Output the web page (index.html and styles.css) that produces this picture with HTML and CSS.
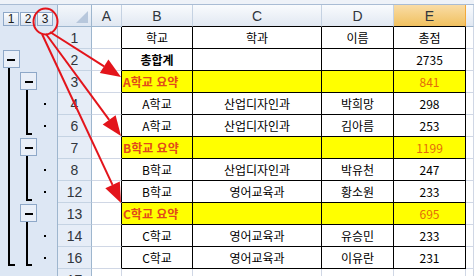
FILE: index.html
```html
<!DOCTYPE html>
<html lang="ko">
<head>
    <meta charset="UTF-8">
    <title>그룹 개요 수준 3</title>
    <link rel="stylesheet" href="styles.css">
</head>
<body>
    <div class="strip"></div>
    <div class="app">
        <!-- outline panel -->
        <div class="outline">
            <div class="levels">
                <span class="lvl">1</span>
                <span class="lvl">2</span>
                <span class="lvl">3</span>
            </div>
            <svg class="tree" width="57" height="249" viewBox="0 27 57 249">
                <!-- level 1 -->
                <rect class="btn" x="3.5" y="50.5" width="16" height="17"/>
                <rect x="7" y="59" width="8" height="2"/>
                <rect x="8" y="68" width="2" height="198"/>
                <rect x="8" y="264" width="7" height="2"/>
                <!-- level 2 -->
                <rect class="btn" x="20.5" y="72.5" width="16" height="17"/>
                <rect x="25" y="81" width="8" height="2"/>
                <rect x="26" y="90" width="2" height="45"/>
                <rect x="26" y="133" width="6" height="2"/>

                <rect class="btn" x="20.5" y="138.5" width="16" height="17"/>
                <rect x="25" y="147" width="8" height="2"/>
                <rect x="26" y="156" width="2" height="45"/>
                <rect x="26" y="199" width="6" height="2"/>

                <rect class="btn" x="20.5" y="204.5" width="16" height="17"/>
                <rect x="25" y="213" width="8" height="2"/>
                <rect x="26" y="222" width="2" height="44"/>
                <rect x="26" y="264" width="6" height="2"/>
                <!-- detail dots -->
                <rect x="44" y="103" width="2" height="2"/>
                <rect x="44" y="125" width="2" height="2"/>
                <rect x="44" y="169" width="2" height="2"/>
                <rect x="44" y="191" width="2" height="2"/>
                <rect x="44" y="235" width="2" height="2"/>
                <rect x="44" y="257" width="2" height="2"/>
            </svg>
        </div>

        <!-- worksheet -->
        <div class="sheet">
            <div class="row head">
                <div class="corner"><span class="tri"></span></div>
                <div class="ch">A</div>
                <div class="ch tb">B</div>
                <div class="ch tb">C</div>
                <div class="ch tb">D</div>
                <div class="ch tb sel">E</div>
                <div class="ch"></div>
            </div>
            <div class="row">
                <div class="rh">1</div>
                <div class="c a"></div>
                <div class="c t">학교</div>
                <div class="c t">학과</div>
                <div class="c t">이름</div>
                <div class="c t">총점</div>
                <div class="c"></div>
            </div>
            <div class="row">
                <div class="rh">2</div>
                <div class="c a"></div>
                <div class="c t bold">총합계</div>
                <div class="c t"></div>
                <div class="c t"></div>
                <div class="c t">2735</div>
                <div class="c"></div>
            </div>
            <div class="row">
                <div class="rh">3</div>
                <div class="c a"></div>
                <div class="c t sum label">A학교 요약</div>
                <div class="c t sum"></div>
                <div class="c t sum"></div>
                <div class="c t sum num">841</div>
                <div class="c"></div>
            </div>
            <div class="row">
                <div class="rh">4</div>
                <div class="c a"></div>
                <div class="c t">A학교</div>
                <div class="c t">산업디자인과</div>
                <div class="c t">박희망</div>
                <div class="c t">298</div>
                <div class="c"></div>
            </div>
            <div class="row">
                <div class="rh">6</div>
                <div class="c a"></div>
                <div class="c t">A학교</div>
                <div class="c t">산업디자인과</div>
                <div class="c t">김아름</div>
                <div class="c t">253</div>
                <div class="c"></div>
            </div>
            <div class="row">
                <div class="rh">7</div>
                <div class="c a"></div>
                <div class="c t sum label">B학교 요약</div>
                <div class="c t sum"></div>
                <div class="c t sum"></div>
                <div class="c t sum num">1199</div>
                <div class="c"></div>
            </div>
            <div class="row">
                <div class="rh">8</div>
                <div class="c a"></div>
                <div class="c t">B학교</div>
                <div class="c t">산업디자인과</div>
                <div class="c t">박유천</div>
                <div class="c t">247</div>
                <div class="c"></div>
            </div>
            <div class="row">
                <div class="rh">12</div>
                <div class="c a"></div>
                <div class="c t">B학교</div>
                <div class="c t">영어교육과</div>
                <div class="c t">황소원</div>
                <div class="c t">233</div>
                <div class="c"></div>
            </div>
            <div class="row">
                <div class="rh">13</div>
                <div class="c a"></div>
                <div class="c t sum label">C학교 요약</div>
                <div class="c t sum"></div>
                <div class="c t sum"></div>
                <div class="c t sum num">695</div>
                <div class="c"></div>
            </div>
            <div class="row">
                <div class="rh">14</div>
                <div class="c a"></div>
                <div class="c t">C학교</div>
                <div class="c t">영어교육과</div>
                <div class="c t">유승민</div>
                <div class="c t">233</div>
                <div class="c"></div>
            </div>
            <div class="row">
                <div class="rh">16</div>
                <div class="c a"></div>
                <div class="c t">C학교</div>
                <div class="c t">영어교육과</div>
                <div class="c t">이유란</div>
                <div class="c t">231</div>
                <div class="c"></div>
            </div>
            <div class="row">
                <div class="rh">17</div>
                <div class="c"></div>
                <div class="c"></div>
                <div class="c"></div>
                <div class="c"></div>
                <div class="c"></div>
                <div class="c"></div>
            </div>
        </div>
    </div>

    <!-- red annotation over the sheet -->
    <svg class="marks" width="474" height="276" viewBox="0 0 474 276">
        <ellipse cx="45.5" cy="21.5" rx="12" ry="13"/>
        <line x1="50" y1="32" x2="104.1" y2="66.3"/>
        <polygon points="121,77 99.8,73.1 108.4,59.5"/>
        <line x1="46" y1="34" x2="109.2" y2="119.9"/>
        <polygon points="121,136 102.7,124.6 115.6,115.2"/>
        <line x1="42" y1="34" x2="112.5" y2="184.9"/>
        <polygon points="121,203 105.3,188.3 119.8,181.5"/>
    </svg>
</body>
</html>
```

FILE: styles.css
```css
/* Excel 2007 style sheet with outline levels */
body {
    margin: 0;
    width: 474px;
    height: 276px;
    overflow: hidden;
    position: relative;
    background-color: white;
    font-family: "Noto Sans CJK KR", "Noto Sans", sans-serif;
}

.strip {
    height: 5px;
    background-color: #eef2f8;
    border-bottom: 1px solid #a9bcd4;
    box-sizing: border-box;
}

.app {
    display: flex;
}

/* outline panel */
.outline {
    width: 58px;
    flex: none;
    background-color: #dde7f4;
    border-right: 1px solid #9eb6ce;
    box-sizing: border-box;
}

.levels {
    height: 22px;
    display: flex;
    gap: 1px;
    padding: 7px 0 0 3px;
    box-sizing: border-box;
}

.lvl {
    width: 16px;
    height: 14px;
    box-sizing: border-box;
    border: 1px solid #8ea8c8;
    background: linear-gradient(#fbfcfe, #dce5f1);
    font-family: "Liberation Sans", Arial, sans-serif;
    font-size: 12px;
    line-height: 12px;
    text-align: center;
    color: #1b1b1b;
}

.tree {
    display: block;
}

.tree rect {
    fill: #000;
}

.tree rect.btn {
    fill: #e9eff8;
    stroke: #8ea8c8;
    stroke-width: 1;
}

/* worksheet */
.sheet {
    flex: 1;
}

.row {
    display: grid;
    grid-template-columns: 34px 30px 71px 129px 72px 72px 1fr;
    height: 22px;
}

.row > div {
    box-sizing: border-box;
    border-right: 1px solid #d0d7e5;
    border-bottom: 1px solid #d0d7e5;
    display: flex;
    align-items: center;
    justify-content: center;
}

.corner {
    background: linear-gradient(#f4f7fb, #dde6f2);
    position: relative;
}

.row > .corner,
.row > .ch {
    border-right-color: #c5d2e2;
    border-bottom-color: #9eb6ce;
}

.row > .corner {
    border-right-color: #9eb6ce;
}

.tri {
    position: absolute;
    right: 3px;
    bottom: 3px;
    width: 0;
    height: 0;
    border-left: 12px solid transparent;
    border-bottom: 12px solid #b7c7dc;
}

.ch {
    background: linear-gradient(#f9fbfd, #e1e8f2);
    font-family: "Liberation Sans", Arial, sans-serif;
    font-size: 14px;
    color: #30353c;
}

.row > .ch.tb {
    border-bottom-color: #000;
}

.row > .ch.sel {
    background: linear-gradient(#f9dca6, #f1c15f);
    border-right-color: #f2a93b;
}

.row > .rh {
    background-color: #e6edf7;
    border-right-color: #9eb6ce;
    border-bottom-color: #c5d3e3;
    font-family: "Liberation Sans", Arial, sans-serif;
    font-size: 14px;
    color: #30353c;
    padding-top: 1px;
}

.c {
    font-size: 12px;
    color: #000;
}

.row > .a {
    border-right-color: #000;
}

.row > .t {
    border-right-color: #000;
    border-bottom-color: #000;
}

.bold {
    font-weight: bold;
}

.sum {
    background-color: #ffff00;
}

.row > .label {
    justify-content: flex-start;
    padding-left: 1px;
    font-weight: bold;
    color: #e24a1a;
}

.num {
    color: #e46c0a;
}

/* annotation overlay */
.marks {
    position: absolute;
    left: 0;
    top: 0;
}

.marks ellipse,
.marks line {
    fill: none;
    stroke: #e3141b;
    stroke-width: 2;
}

.marks polygon {
    fill: #e3141b;
}
```
